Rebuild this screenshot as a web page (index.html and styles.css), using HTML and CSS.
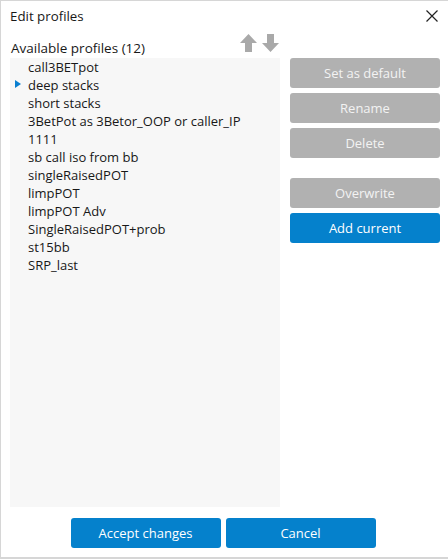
FILE: index.html
```
<!DOCTYPE html>
<html>
<head>
<meta charset="utf-8">
<link rel="stylesheet" href="styles.css">
</head>
<body>
<div class="dialog">
  <div class="titlebar">
    <span class="title">Edit profiles</span>
    <svg class="close" width="12" height="12" viewBox="0 0 12 12"><path d="M0.5 0.5 L11.5 11.5 M11.5 0.5 L0.5 11.5" stroke="#222" stroke-width="1.2" fill="none"/></svg>
  </div>
  <div class="content">
    <div class="left">
      <div class="header">
        <span class="label">Available profiles (12)</span>
        <div class="arrows">
          <svg width="17" height="18" viewBox="0 0 17 18"><path d="M8.5 0 L17 9 L12 9 L12 18 L5 18 L5 9 L0 9 Z" fill="#a9a9a9"/></svg>
          <svg width="17" height="18" viewBox="0 0 17 18"><path d="M8.5 18 L17 9 L12 9 L12 0 L5 0 L5 9 L0 9 Z" fill="#a9a9a9"/></svg>
        </div>
      </div>
      <ul class="list">
        <li>call3BETpot</li>
        <li class="current">deep stacks</li>
        <li>short stacks</li>
        <li>3BetPot as 3Betor_OOP or caller_IP</li>
        <li>1111</li>
        <li>sb call iso from bb</li>
        <li>singleRaisedPOT</li>
        <li>limpPOT</li>
        <li>limpPOT Adv</li>
        <li>SingleRaisedPOT+prob</li>
        <li>st15bb</li>
        <li>SRP_last</li>
      </ul>
    </div>
    <div class="right">
      <button class="btn gray">Set as default</button>
      <button class="btn gray">Rename</button>
      <button class="btn gray">Delete</button>
      <button class="btn gray spaced">Overwrite</button>
      <button class="btn blue">Add current</button>
    </div>
  </div>
  <div class="footer">
    <button class="btn blue">Accept changes</button>
    <button class="btn blue">Cancel</button>
  </div>
</div>
</body>
</html>
```
FILE: styles.css
```
html, body {
  margin: 0;
  padding: 0;
  background: #fff;
}
body {
  font-family: "Open Sans", "Liberation Sans", sans-serif;
  font-size: 13px;
  color: #181818;
}
.dialog {
  width: 448px;
  height: 559px;
  box-sizing: border-box;
  border-top: 1px solid #d6d6d6;
  border-left: 1px solid #d6d6d6;
  border-bottom: 2px solid #d6d6d6;
  display: flex;
  flex-direction: column;
}
.titlebar {
  height: 30px;
  display: flex;
  align-items: center;
  justify-content: space-between;
  padding: 0 10px 0 9px;
  box-sizing: border-box;
}
.title {
  font-size: 13.3px;
}
.close {
  margin-top: 0px;
}
.content {
  display: flex;
  gap: 10px;
  padding-left: 9px;
  height: 449px;
  padding-top: 27px;
}
.left {
  width: 270px;
  display: flex;
  flex-direction: column;
  margin-top: -27px;
}
.header {
  height: 27px;
  display: flex;
  align-items: flex-end;
  justify-content: space-between;
}
.label {
  font-size: 13.5px;
  line-height: 18px;
  padding-left: 1px;
  padding-bottom: 1px;
}
.arrows {
  display: flex;
  gap: 5px;
  align-self: flex-start;
  margin-top: 3px;
  margin-right: 1px;
}
.list {
  list-style: none;
  margin: 0;
  padding: 0;
  box-sizing: border-box;
  height: 449px;
  background: #f7f7f7;
}
.list li {
  height: 18px;
  line-height: 18px;
  padding-left: 18px;
  position: relative;
  white-space: nowrap;
}
.list li.current::before {
  content: "";
  position: absolute;
  left: 5px;
  top: 4px;
  border-left: 6px solid #0a7fd0;
  border-top: 4.5px solid transparent;
  border-bottom: 4.5px solid transparent;
}
.right {
  width: 150px;
  display: flex;
  flex-direction: column;
  gap: 5px;
}
.btn {
  width: 150px;
  height: 30px;
  border: none;
  border-radius: 3px;
  font-family: inherit;
  font-size: 13px;
  color: #fff;
  padding: 0;
  cursor: default;
}
.btn.gray {
  background: #b1b1b1;
  color: #f3f3f3;
}
.btn.blue {
  background: #0581cc;
}
.btn.spaced {
  margin-top: 15px;
}
.footer {
  display: flex;
  justify-content: center;
  gap: 5px;
  padding-top: 11px;
  padding-right: 3px;
}
```
